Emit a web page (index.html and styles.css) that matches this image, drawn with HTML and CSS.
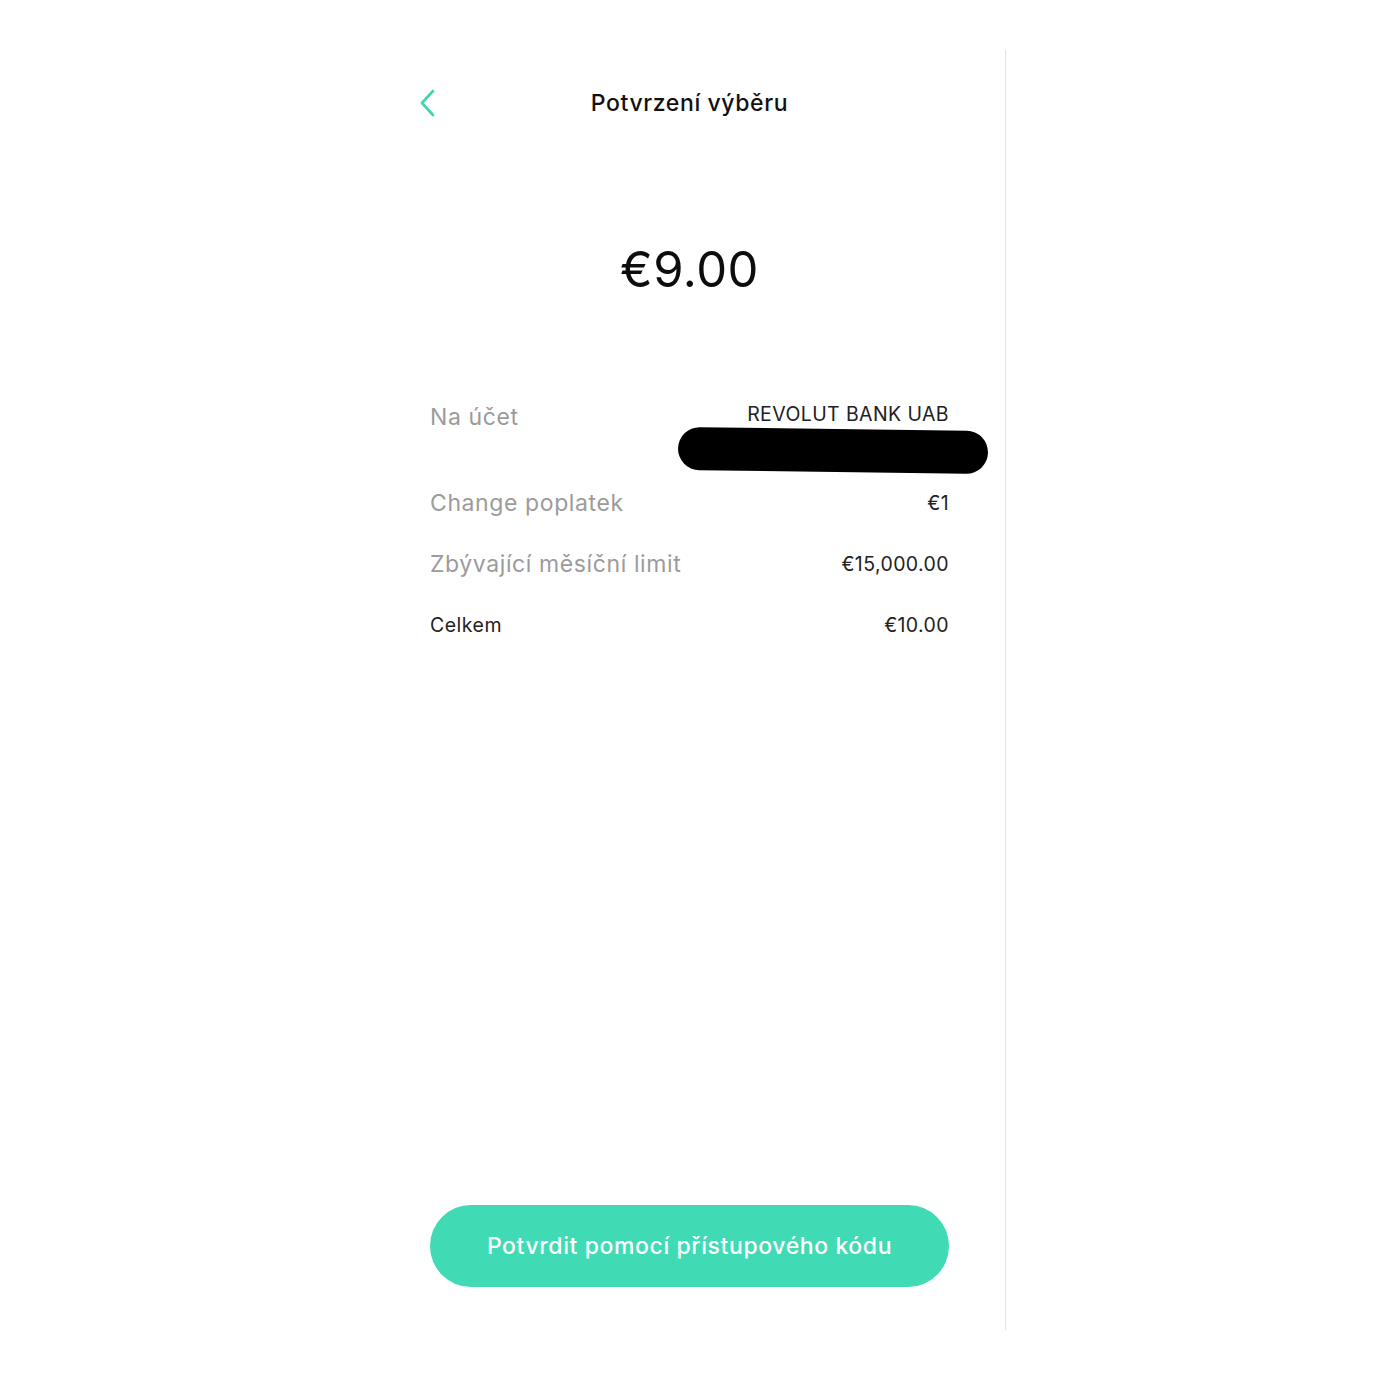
FILE: index.html
```html
<!DOCTYPE html>
<html lang="cs">
<head>
<meta charset="utf-8">
<title>Potvrzení výběru</title>
<link rel="stylesheet" href="styles.css">
</head>
<body>
<div class="page">
  <main class="screen">
    <header class="header">
      <button class="back" aria-label="Zpět">
        <svg width="16" height="28" viewBox="0 0 16 28" fill="none">
          <path d="M13 2 L2 14 L13 26" stroke="#3dd6ad" stroke-width="2.6" stroke-linecap="round" stroke-linejoin="round"/>
        </svg>
      </button>
      <h1 class="title">Potvrzení výběru</h1>
    </header>

    <div class="amount">€9.00</div>

    <section class="details">
      <div class="row row-account">
        <span class="label">Na účet</span>
        <div class="value-col">
          <span class="value">REVOLUT BANK UAB</span>
          <span class="account-line"></span>
          <span class="redaction"></span>
        </div>
      </div>
      <div class="row">
        <span class="label">Change poplatek</span>
        <span class="value">€1</span>
      </div>
      <div class="row">
        <span class="label">Zbývající měsíční limit</span>
        <span class="value">€15,000.00</span>
      </div>
      <div class="row">
        <span class="label label-dark">Celkem</span>
        <span class="value">€10.00</span>
      </div>
    </section>

    <div class="footer">
      <button class="confirm">Potvrdit pomocí přístupového kódu</button>
    </div>
  </main>
</div>
</body>
</html>
```

FILE: styles.css
```css
* { box-sizing: border-box; }

html, body {
  margin: 0;
  padding: 0;
  background: #ffffff;
  font-family: Inter, "Noto Sans", "Liberation Sans", sans-serif;
  color: #111111;
}

.page {
  display: flex;
  justify-content: center;
  padding-top: 50px;
}

.screen {
  width: 632px;
  height: 1280px;
  border-right: 1px solid #e2e2e2;
  padding: 0 56px 43px;
  display: flex;
  flex-direction: column;
}

.header {
  margin-top: 25px;
  height: 56px;
  display: flex;
  align-items: center;
  justify-content: center;
  position: relative;
}

.back {
  position: absolute;
  left: -10px;
  top: 14px;
  width: 16px;
  height: 28px;
  padding: 0;
  border: 0;
  background: none;
  display: flex;
}

.title {
  margin: 0;
  font-size: 23px;
  font-weight: 500;
  letter-spacing: 0.6px;
  color: #111111;
}

.amount {
  margin-top: 110px;
  text-align: center;
  font-size: 49px;
  line-height: 58px;
  font-weight: 400;
  letter-spacing: 0.5px;
  color: #0d0d0d;
}

.details {
  margin-top: 103px;
  display: flex;
  flex-direction: column;
  gap: 31px;
}

.row {
  display: flex;
  justify-content: space-between;
  align-items: flex-start;
  min-height: 30px;
}

.label {
  font-size: 23px;
  line-height: 30px;
  letter-spacing: 0.6px;
  color: #9b9b9b;
}

.label-dark {
  font-size: 19.5px;
  letter-spacing: 0.5px;
  color: #222222;
}

.value {
  font-size: 19.5px;
  line-height: 30px;
  letter-spacing: 0.4px;
  color: #222222;
}

.row-account .value {
  line-height: 24px;
}

.value-col {
  position: relative;
  display: flex;
  flex-direction: column;
  align-items: flex-end;
}

.account-line {
  height: 31px;
}

.redaction {
  position: absolute;
  top: 27px;
  right: -39px;
  width: 310px;
  height: 43px;
  border-radius: 22px;
  background: #000000;
  transform: rotate(0.8deg);
}

.footer {
  margin-top: auto;
}

.confirm {
  width: 100%;
  height: 82px;
  border: 0;
  border-radius: 41px;
  background: #40dab4;
  color: #ffffff;
  font-family: Inter, "Noto Sans", "Liberation Sans", sans-serif;
  font-size: 23px;
  font-weight: 500;
  letter-spacing: 0.6px;
}
```
